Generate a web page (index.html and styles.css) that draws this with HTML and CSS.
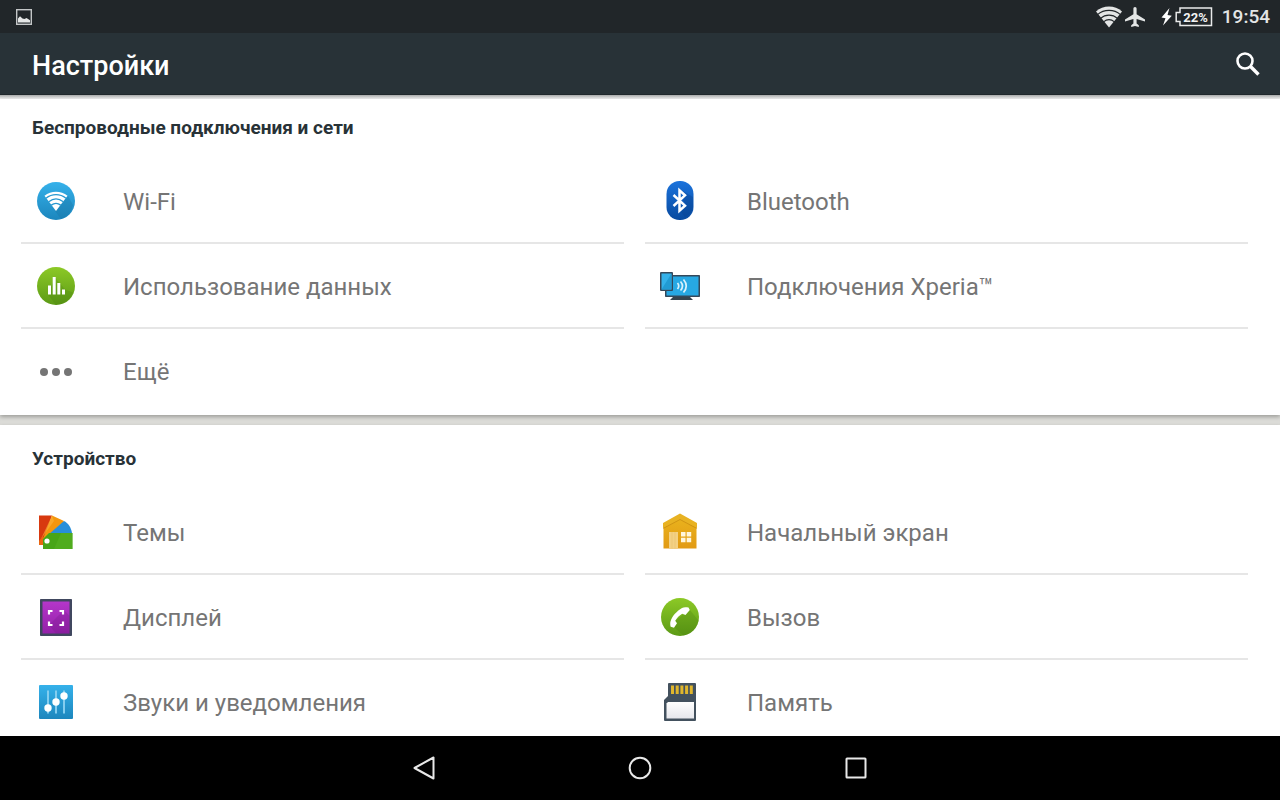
FILE: index.html
```html
<!DOCTYPE html>
<html lang="ru">

<head>
  <meta charset="UTF-8">
  <meta name="viewport" content="width=device-width, initial-scale=1">
  <title>Настройки</title>
  <link rel="stylesheet" href="styles.css">
</head>

<body>
  <div class="status">
    <svg class="shot" width="16" height="16" viewBox="0 0 16 16">
      <rect x="0.7" y="0.7" width="14.6" height="14.6" fill="none" stroke="#c3c6c7" stroke-width="1.4"/>
      <path d="M2 13.500V9.500l2-2.300 2.500 2.300 2 .5 2-1 3.500 2.200v2.300z" fill="#e4e6e6"/>
    </svg>
    <div class="state">
      <svg width="26" height="22" viewBox="0 0 26 22">
        <path d="M0 5.500C7-1.300 19-1.300 26 5.500L13 21.500z" fill="#e3e5e5"/>
        <path d="M1.500 8.700c6.500-5.800 16.500-5.800 23 0M4.500 12.300c5-4.300 12-4.300 17 0M7.500 15.900c3.500-2.900 7.500-2.900 11 0" fill="none" stroke="#212629" stroke-width="1.100"/>
      </svg>
      <svg class="plane" width="20" height="20" viewBox="0 0 20 20">
        <path d="M10 0c-1 0-1.600.8-1.600 1.800v5.500L0 12.400v2l8.400-2.500v4.600l-2.200 1.700V20L10 18.900l3.800 1.100v-1.800l-2.200-1.700v-4.600L20 14.400v-2l-8.400-5.100V1.800C11.600.8 11 0 10 0z" fill="#e3e5e5"/>
      </svg>
      <svg class="bolt" width="11" height="18" viewBox="0 0 11 18">
        <path d="M8.500 0L.5 9.500l4 .8L2 17.500 10.800 7.800l-4.300-.9z" fill="#fff"/>
      </svg>
      <svg class="battery" width="38" height="20" viewBox="0 0 38 20">
        <path d="M5 1h31.500v17.500H5v-4H1.200V5.500H5z" fill="none" stroke="#e9eaea" stroke-width="1.500"/>
        <text x="20.500" y="14.500" text-anchor="middle">22%</text>
      </svg>
      <span class="time">19:54</span>
    </div>
  </div>

  <header class="top">
    <h1>Настройки</h1>
    <button type="button" class="search" aria-label="Поиск">
      <svg width="24" height="24" viewBox="0 0 24 24" fill="none" stroke="#fff">
        <circle cx="9" cy="9" r="7.500" stroke-width="2.600"/>
        <path d="M14.300 14.300L22.500 22.500" stroke-width="3.400"/>
      </svg>
    </button>
  </header>

  <main class="content">
    <section class="group">
      <h2>Беспроводные подключения и сети</h2>
      <ul class="list">
        <li><a href="#wifi">
          <svg class="icon" viewBox="0 0 48 48">
            <defs>
              <linearGradient id="blue" x1="0" y1="0" x2="0" y2="1"><stop offset="0" stop-color="#35b1ea"/><stop offset="1" stop-color="#1c86bd"/></linearGradient>
              <linearGradient id="green" x1="0" y1="0" x2="0" y2="1"><stop offset="0" stop-color="#8cc926"/><stop offset="1" stop-color="#5c9a16"/></linearGradient>
            </defs>
            <circle cx="24" cy="24" r="19" fill="url(#blue)"/>
            <path d="M36 19l5 9a19 19 0 0 1-12 14l-6-8z" fill="#16719f" opacity=".3"/>
            <path d="M12.500 18.700C19 13.300 29 13.300 35.500 18.700L24 34z" fill="#fff"/>
            <path d="M14 21.200c6-4.800 14-4.800 20 0M16.700 24.700c4.500-3.500 10.100-3.500 14.600 0M19.300 28.100c3-2.100 6.400-2.100 9.400 0" fill="none" stroke="#2798d1" stroke-width="1.300"/>
          </svg>
          <span>Wi-Fi</span>
        </a></li>
        <li><a href="#bluetooth">
          <svg class="icon" viewBox="0 0 48 48">
            <defs>
              <linearGradient id="navy" x1="0" y1="0" x2="0" y2="1"><stop offset="0" stop-color="#1b73dc"/><stop offset="1" stop-color="#084a9f"/></linearGradient>
            </defs>
            <rect x="10.500" y="4" width="27" height="39" rx="13" fill="url(#navy)"/>
            <path d="M25 13l5 5-3 5 4 6-6 6 4 5c5-2 8-6 8-11V20z" fill="#073f8b" opacity=".35"/>
            <path d="M17.500 18l11.500 10.700-5.500 5V13.300l5.500 5L17.500 29" fill="none" stroke="#fff" stroke-width="2.500"/>
          </svg>
          <span>Bluetooth</span>
        </a></li>
        <li><a href="#data">
          <svg class="icon" viewBox="0 0 48 48">
            <circle cx="24" cy="24" r="19" fill="url(#green)"/>
            <path d="M16 32.500l7-17 10 12 8 3a19 19 0 0 1-17 12.500z" fill="#437d0b" opacity=".25"/>
            <path d="M16 23.500h3v9h-3zM20.700 15h3v17.500h-3zM25.300 21h3v11.500h-3zM30 27.500h3v5h-3z" fill="#fff"/>
          </svg>
          <span>Использование данных</span>
        </a></li>
        <li><a href="#xperia">
          <svg class="icon" viewBox="0 0 48 48">
            <path d="M18 34h15l4 4H14z" fill="#35444f"/>
            <rect x="9" y="13" width="35" height="22" rx=".8" fill="#34495b"/>
            <rect x="10.500" y="14.500" width="32" height="19" fill="#27a8e3"/>
            <rect x="4" y="10" width="13" height="19" rx="1" fill="#34495b"/>
            <rect x="5.500" y="11.500" width="10" height="16" fill="#33b1e9"/>
            <path d="M15.500 11.500v16h-10z" fill="#219bd3"/>
            <path d="M21.500 21q2.500 3 0 6M24.500 19.500q4 4.500 0 9M27.500 17.500q5.500 6.500 0 13" fill="none" stroke="#d9f2fc" stroke-width="1.700"/>
          </svg>
          <span>Подключения Xperia™</span>
        </a></li>
        <li><a href="#more">
          <svg class="icon" viewBox="0 0 48 48" fill="#757575">
            <circle cx="12" cy="25" r="4"/>
            <circle cx="24" cy="25" r="4"/>
            <circle cx="36" cy="25" r="4"/>
          </svg>
          <span>Ещё</span>
        </a></li>
      </ul>
    </section>

    <section class="group">
      <h2>Устройство</h2>
      <ul class="list">
        <li><a href="#themes">
          <svg class="icon" viewBox="0 0 48 48">
            <path d="M7 7.500h13L11 36H7z" fill="#d8390f"/>
            <path d="M27 15l5-2c4 2 7 6 8 12H15z" fill="#278fda"/>
            <path d="M20 7.500L32 13 16 27l-7 9z" fill="#f3960d"/>
            <path d="M20 7.500L9 31l13-18z" fill="#fbb33a" opacity=".6"/>
            <path d="M7 33l4-5v9H7z" fill="#e96711"/>
            <path d="M17 25h23.500v16H11V31z" fill="#48a518"/>
            <path d="M29 25h11.500v16H22z" fill="#58b323" opacity=".5"/>
            <circle cx="15" cy="33" r="2.600" fill="#fff"/>
          </svg>
          <span>Темы</span>
        </a></li>
        <li><a href="#home">
          <svg class="icon" viewBox="0 0 48 48">
            <defs>
              <linearGradient id="gold" x1="0" y1="0" x2="0" y2="1"><stop offset="0" stop-color="#eab51e"/><stop offset="1" stop-color="#e29a14"/></linearGradient>
            </defs>
            <path d="M24 7l16.500 9v24.500h-33V16z" fill="url(#gold)"/>
            <path d="M24 12l17 9v-1.500l-17-9-17 9V21z" fill="#b87a0b" opacity=".5"/>
            <path d="M24 5.500L41 15v5L24 11 7 20v-5z" fill="#e8b222"/>
            <path d="M13 24h9v16.500h-9z" fill="#f3d185"/>
            <path d="M16 24v16.500M19 24v16.500" stroke="#ebc46d" stroke-width=".6"/>
            <path d="M25 24h4.500v4.500H25zM30.700 24h4.500v4.500h-4.500zM25 29.700h4.500v4.500H25zM30.700 29.700h4.500v4.500h-4.500z" fill="#fff6dd"/>
          </svg>
          <span>Начальный экран</span>
        </a></li>
        <li><a href="#display">
          <svg class="icon" viewBox="0 0 48 48">
            <defs>
              <linearGradient id="purple" x1="0" y1="0" x2="0" y2="1"><stop offset="0" stop-color="#b536ca"/><stop offset="1" stop-color="#9321a8"/></linearGradient>
            </defs>
            <rect x="8" y="6" width="32" height="37" rx=".8" fill="#40475f"/>
            <rect x="10.500" y="8.500" width="27" height="32" fill="url(#purple)"/>
            <path d="M32 17l5.500 6v17.500H24L17 32z" fill="#65107a" opacity=".2"/>
            <path d="M17 21.500V18h3.500M27.500 18H31v3.500M31 28.500V32h-3.500M20.500 32H17v-3.500" fill="none" stroke="#fff" stroke-width="2.200"/>
          </svg>
          <span>Дисплей</span>
        </a></li>
        <li><a href="#call">
          <svg class="icon" viewBox="0 0 48 48">
            <circle cx="24" cy="24" r="19" fill="url(#green)"/>
            <path d="M33.500 16.500l9 11a19 19 0 0 1-15 15L15 31.500z" fill="#437d0b" opacity=".25"/>
            <path d="M33.800 17L32.500 14.500c-2 0-4.500-.6-6.500.6-5 3-10 8-11.500 13.400-.5 1.500-.2 4 .2 5.300l3.300 1 3-4.500-1.800-2.500c1.800-3 4-5.300 7-7l3.300 1.200z" fill="#fff"/>
          </svg>
          <span>Вызов</span>
        </a></li>
        <li><a href="#sound">
          <svg class="icon" viewBox="0 0 48 48">
            <rect x="7" y="7" width="34" height="34" rx="1" fill="url(#blue)"/>
            <path d="M16 12.500v23M24 12.500v23M32 12.500v23" stroke="#83cdef" stroke-width="2"/>
            <g fill="#fff">
              <circle cx="16" cy="30" r="3.700"/>
              <circle cx="24" cy="24" r="3.700"/>
              <circle cx="32" cy="18" r="3.700"/>
            </g>
          </svg>
          <span>Звуки и уведомления</span>
        </a></li>
        <li><a href="#memory">
          <svg class="icon" viewBox="0 0 48 48">
            <defs>
              <linearGradient id="label" x1="0" y1="0" x2="0" y2="1"><stop offset="0" stop-color="#fff"/><stop offset="1" stop-color="#e6e7ec"/></linearGradient>
            </defs>
            <path d="M13 5h26q1 0 1 1v36q0 1-1 1H9q-1 0-1-1V22l4-4V6q0-1 1-1z" fill="#43515e"/>
            <path d="M15 7.500h3v8.500h-3zM19.700 7.500h3v8.500h-3zM24.400 7.500h3v8.500h-3zM29.100 7.500h3v8.500h-3zM33.800 7.500h3v8.500h-3z" fill="#e0b62c"/>
            <path d="M12 24h26v16.500H10.500V25.500z" fill="url(#label)"/>
          </svg>
          <span>Память</span>
        </a></li>
      </ul>
    </section>
  </main>

  <nav class="keys">
    <button type="button" aria-label="Назад">
      <svg viewBox="0 0 26 26"><path d="M3.500 13L22.500 2.500v21z"/></svg>
    </button>
    <button type="button" aria-label="Домой">
      <svg viewBox="0 0 26 26"><circle cx="13" cy="13" r="10.300"/></svg>
    </button>
    <button type="button" aria-label="Недавние">
      <svg viewBox="0 0 26 26"><rect x="3.500" y="3.500" width="19" height="19" rx=".5"/></svg>
    </button>
  </nav>
</body>
</html>
```

FILE: styles.css
```css
*{
	box-sizing:border-box;
}
body{
	display:flex;
	flex-direction:column;
	height:100vh;
	margin:0;
	overflow:hidden;
	background:#dcdcd8;
	font-family:Roboto,"Noto Sans",sans-serif;
}
button{
	padding:0;
	border:0;
	background:none;
	cursor:pointer;
}
svg{
	display:block;
	flex:none;
}

/* status bar */
.status{
	display:flex;
	flex:none;
	align-items:center;
	justify-content:space-between;
	height:33px;
	padding:0 10px 0 16px;
	background:#212629;
}
.state{
	display:flex;
	align-items:center;
}
.plane{
	margin-left:3px;
}
.bolt{
	margin-left:16px;
}
.battery{
	margin-left:3px;
}
.battery text{
	fill:#f2f2f2;
	font-size:13px;
	font-weight:700;
}
.time{
	margin-left:9px;
	color:#e3e5e5;
	font-size:19px;
	font-weight:500;
	line-height:34px;
}

/* title bar */
.top{
	display:flex;
	flex:none;
	align-items:center;
	justify-content:space-between;
	height:62px;
	padding:0 20px 0 32px;
	background:#283237;
	border-bottom:1px solid #20282c;
}
.top h1{
	margin:0;
	padding-top:4px;
	color:#fff;
	font-size:27px;
	font-weight:500;
	line-height:32px;
}

/* settings */
.content{
	flex:1;
	min-height:0;
	padding-top:4px;
	overflow:hidden;
	background:linear-gradient(#a6a8a8,#f4f4f4 4px,#dcdcd8 5px);
}
.group{
	padding-bottom:1px;
	background:#fff;
	box-shadow:0 2px 4px #9e9e9a;
}
.group + .group{
	margin-top:10px;
	padding-top:5px;
}
.group h2{
	margin:0;
	padding:17px 32px 19px;
	color:#283237;
	font-size:19px;
	font-weight:700;
	line-height:24px;
}
.list{
	display:grid;
	grid-template-columns:1fr 1fr;
	column-gap:21px;
	margin:0;
	padding:0 32px 0 21px;
	list-style:none;
}
.list a{
	display:flex;
	align-items:center;
	height:85px;
	padding-left:11px;
	border-bottom:2px solid #e6e6e6;
	color:#757575;
	font-size:24px;
	line-height:32px;
	text-decoration:none;
}
.list li:last-child:nth-child(odd) a{
	border-bottom-color:transparent;
}
.list span{
	padding:2px 0 0 43px;
}
.icon{
	width:48px;
	height:48px;
}

/* navigation keys */
.keys{
	display:flex;
	flex:none;
	justify-content:center;
	height:64px;
	background:#000;
}
.keys button{
	display:flex;
	align-items:center;
	justify-content:center;
	width:216px;
}
.keys svg{
	width:26px;
	height:26px;
	fill:none;
	stroke:#e8e8e8;
	stroke-width:2;
	stroke-linejoin:round;
}
```
